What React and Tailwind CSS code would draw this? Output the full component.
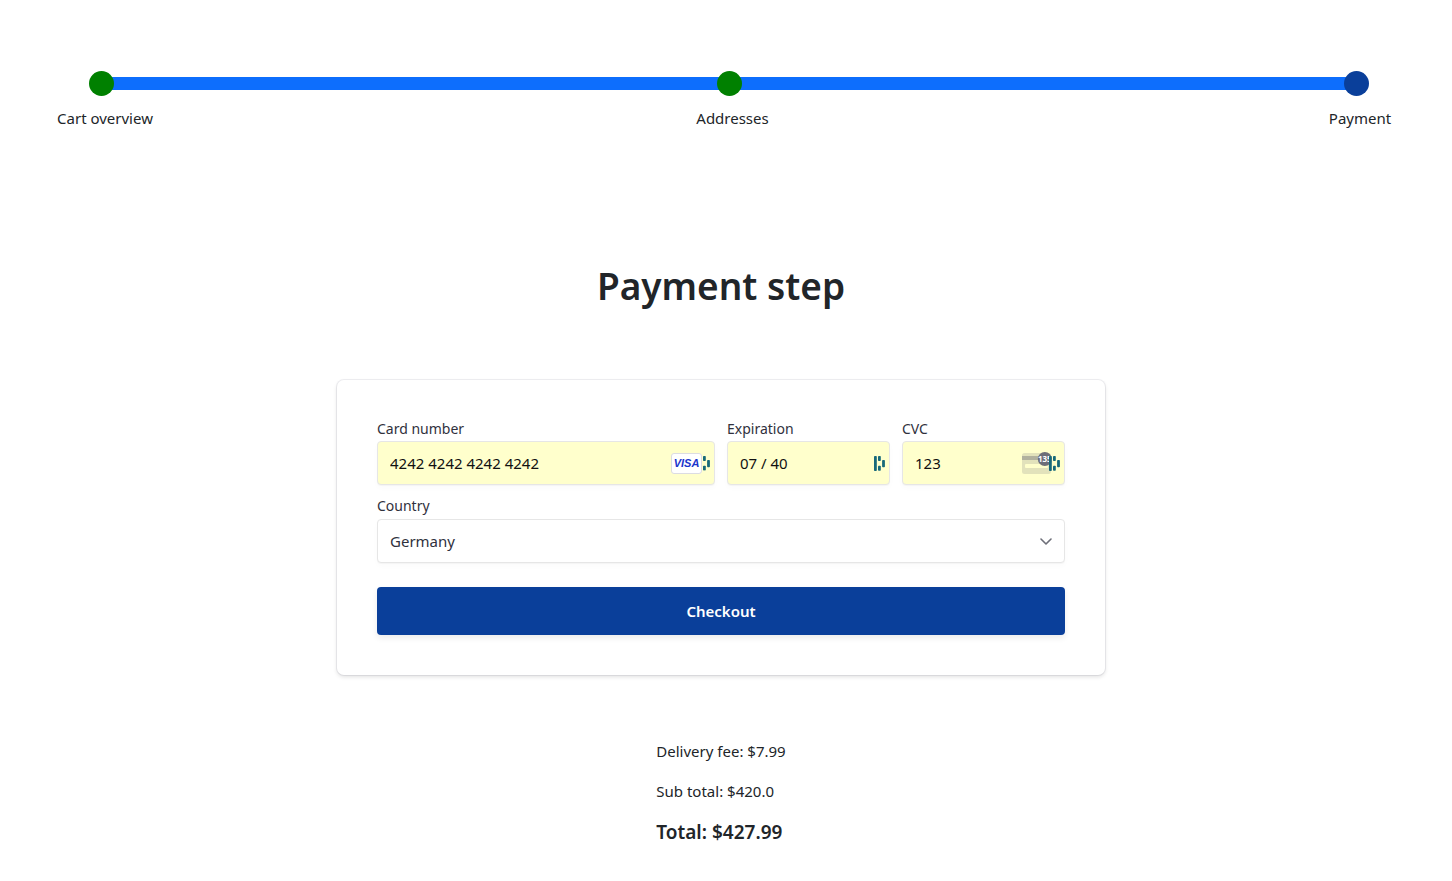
import { useState } from "react";

const steps = [
  { label: "Cart overview", dot: "bg-[#008000]" },
  { label: "Addresses", dot: "bg-[#008000]" },
  { label: "Payment", dot: "bg-[#0a3f9a]" },
];

const fieldClass =
  "h-11 w-full rounded border border-[#e6e6e6] px-3 text-[15px] shadow-[0_1px_1px_rgba(0,0,0,0.03),0_3px_6px_rgba(0,0,0,0.02)] outline-none";

function BarsIcon({ className = "" }) {
  return (
    <svg viewBox="0 0 11 15" fill="#17697a" className={`h-[15px] w-[11px] ${className}`} aria-hidden="true">
      <rect x="0" y="0" width="2.8" height="15" rx="0.8" />
      <rect x="4" y="0" width="2.8" height="5" rx="0.8" />
      <rect x="4" y="9.8" width="2.8" height="5" rx="0.8" />
      <rect x="8.1" y="4" width="2.8" height="7.2" rx="0.8" />
    </svg>
  );
}

function VisaMark() {
  return (
    <span className="flex h-[21px] w-[31px] items-center justify-center rounded-[3px] border border-[#dcdce2] bg-white font-['Liberation_Sans',Arial,sans-serif] text-[11px] font-bold text-[#1a35cc] italic">
      VISA
    </span>
  );
}

function CvcIcon() {
  return (
    <svg viewBox="0 0 30 21" className="h-[21px] w-[30px] overflow-visible" aria-hidden="true">
      <rect width="29" height="21" rx="2.5" fill="#6d6e78" fillOpacity="0.2" />
      <rect y="3" width="29" height="4" fill="#6d6e78" fillOpacity="0.42" />
      <rect x="3" y="11" width="23" height="4" rx="1" fill="#ffffcc" />
      <circle cx="22.8" cy="6" r="7" fill="#6d6e78" />
      <text x="22.8" y="9" textAnchor="middle" fontSize="8" fontWeight="700" fill="#fff">
        135
      </text>
    </svg>
  );
}

function CardField({ id, label, initial, className, children }) {
  const [value, setValue] = useState(initial);
  return (
    <div className={className}>
      <label htmlFor={id} className="mb-[3px] block text-sm leading-[18px] text-[#30313d]">
        {label}
      </label>
      <div className="relative">
        <input
          id={id}
          value={value}
          onChange={(e) => setValue(e.target.value)}
          inputMode="numeric"
          className={`${fieldClass} bg-[#ffffcc] text-[#111111]`}
        />
        <div className="pointer-events-none absolute inset-y-0 right-[5px] flex items-center">{children}</div>
      </div>
    </div>
  );
}

export default function App() {
  return (
    <div className="bg-white pr-[10px] pb-9 font-['Noto_Sans','Open_Sans',sans-serif] text-[15px] leading-6 text-[#212529]">
      <nav aria-label="Checkout progress" className="pt-[71px]">
        <div className="relative mr-[73px] ml-[89px] flex items-center justify-between">
          <div className="absolute inset-x-3 h-[13px] bg-[#0d6efd]" />
          {steps.map((s) => (
            <span key={s.label} className={`relative size-[25px] rounded-full ${s.dot}`} />
          ))}
        </div>
        <ol className="mt-[10px] mr-[18px] ml-[41px] flex justify-between">
          {steps.map((s) => (
            <li key={s.label} className="w-32 text-center">
              {s.label}
            </li>
          ))}
        </ol>
      </nav>

      <main>
        <h1 className="mt-[132px] text-center text-[37px] leading-[48px] font-semibold">Payment step</h1>

        <form
          onSubmit={(e) => e.preventDefault()}
          className="mx-auto mt-[70px] max-w-3xl rounded-[7px] px-10 py-10 shadow-[0_0_0_1px_rgba(50,50,93,0.08),0_2px_4px_rgba(0,0,0,0.12)]"
        >
          <div className="grid grid-cols-4 gap-3">
            <CardField id="card" label="Card number" initial="4242 4242 4242 4242" className="col-span-2">
              <span className="mr-2">
                <VisaMark />
              </span>
              <BarsIcon className="absolute right-0 [clip-path:inset(0_0_0_3px)]" />
            </CardField>
            <CardField id="expiration" label="Expiration" initial="07 / 40">
              <BarsIcon />
            </CardField>
            <CardField id="cvc" label="CVC" initial="123">
              <span className="mr-2">
                <CvcIcon />
              </span>
              <BarsIcon className="absolute right-0" />
            </CardField>
            <div className="col-span-4">
              <label htmlFor="country" className="mb-1 block text-sm leading-[18px] text-[#30313d]">
                Country
              </label>
              <div className="relative">
                <select id="country" defaultValue="Germany" className={`${fieldClass} appearance-none bg-white text-[#30313d]`}>
                  <option>Germany</option>
                  <option>Austria</option>
                  <option>France</option>
                </select>
                <svg
                  viewBox="0 0 12 8"
                  className="pointer-events-none absolute top-[19px] right-[13px] h-2 w-3"
                  fill="none"
                  stroke="#6d6e78"
                  strokeWidth="1.6"
                  strokeLinecap="round"
                  strokeLinejoin="round"
                  aria-hidden="true"
                >
                  <path d="M1 1l5 5 5-5" />
                </svg>
              </div>
            </div>
          </div>
          <button
            type="submit"
            className="mt-6 h-12 w-full rounded bg-[#0a3f9a] text-[15px] font-semibold text-white shadow-[0_3px_6px_rgba(0,0,0,0.08)]"
          >
            Checkout
          </button>
        </form>

        <section aria-label="Order summary" className="mx-auto mt-16 w-fit">
          <p>Delivery fee: $7.99</p>
          <p className="mt-4">Sub total: $420.0</p>
          <p className="mt-[17px] text-[19px] leading-6 font-semibold">Total: $427.99</p>
        </section>
      </main>
    </div>
  );
}
